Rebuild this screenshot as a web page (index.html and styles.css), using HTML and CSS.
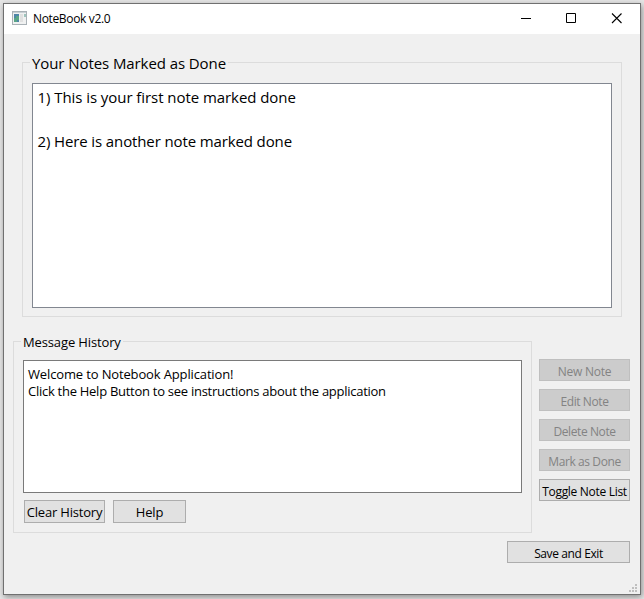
FILE: index.html
```html
<!DOCTYPE html>
<html lang="en">
<head>
<meta charset="utf-8">
<title>NoteBook v2.0</title>
<link rel="stylesheet" href="styles.css">
</head>
<body>
<main class="window">
  <header class="titlebar">
    <svg class="app-icon" width="15" height="14" viewBox="0 0 15 14" shape-rendering="crispEdges">
      <path fill="#a9b1b6" d="M0 0h15v14H0z"/>
      <path fill="#f0f1f1" d="M1 2h13v11H1z"/>
      <path fill="#c8d0d4" d="M1 1h13v1H1z"/>
      <path fill="#4f86a8" d="M2 3h5v8H2z"/>
      <path fill="#5aa686" d="M2 7h3v4H2zM4 5h3v4H4z"/>
      <path fill="#e0e0e0" d="M8 3h3v8H8z"/>
      <path fill="#9fc4bd" d="M12 3h2v3h-2z"/>
    </svg>
    <span class="title">NoteBook v2.0</span>
    <svg class="controls" width="102" height="12" viewBox="0 0 102 12" fill="none" stroke="#000">
      <path d="M0 5.5h10M45.500 .5h9v9h-9z"/>
      <path stroke-width="1.100" d="M91 .5l9.500 9.500M100.500 .5L91 10"/>
    </svg>
  </header>
  <fieldset class="group notes">
    <legend>Your Notes Marked as Done</legend>
    <div class="box note-list">
      <p class="note-one">1) This is your first note marked done</p>
      <p class="note-two">2) Here is another note marked done</p>
    </div>
  </fieldset>
  <div class="lower">
    <fieldset class="group history">
      <legend>Message History</legend>
      <div class="box messages">
        <p class="welcome">Welcome to Notebook Application!</p>
        <p class="hint">Click the Help Button to see instructions about the application</p>
      </div>
      <div class="history-actions">
        <button class="clear">Clear History</button>
        <button class="help">Help</button>
      </div>
    </fieldset>
    <nav class="actions">
      <button class="new" disabled>New Note</button>
      <button disabled>Edit Note</button>
      <button disabled>Delete Note</button>
      <button disabled>Mark as Done</button>
      <button class="toggle">Toggle Note List</button>
    </nav>
  </div>
  <button class="save">Save and Exit</button>
  <svg class="grip" width="8" height="8" viewBox="0 0 8 8" fill="#bfbfbf" shape-rendering="crispEdges">
    <path d="M6 0h2v2H6zM3 3h2v2H3zM6 3h2v2H6zM0 6h2v2H0zM3 6h2v2H3zM6 6h2v2H6z"/>
  </svg>
</main>
</body>
</html>
```
FILE: styles.css
```css
* { box-sizing: border-box; }
body {
  margin: 0;
  height: 599px;
  padding: 3px;
  overflow: hidden;
  background: #e6e6e6;
  font-family: "Open Sans", "Noto Sans", sans-serif;
  color: #000;
}
p { margin: 0; white-space: nowrap; }
.window {
  position: relative;
  width: 638px;
  height: 592px;
  border: 1px solid #707070;
  background: #f0f0f0;
  box-shadow: 1px 2px 6px rgba(0, 0, 0, .4);
}
.titlebar {
  display: flex;
  align-items: flex-start;
  height: 30px;
  padding: 7px 17px 0 8px;
  background: #fff;
}
.app-icon { display: block; }
.title {
  margin: 0 0 0 6px;
  font-size: 12px;
  line-height: 16px;
  letter-spacing: -.35px;
}
.controls { display: block; margin: 2px 0 0 auto; }
.group {
  min-width: 0;
  margin: 0;
  border: 1px solid #dcdcdc;
}
legend { padding: 0 2px; white-space: nowrap; }
.notes {
  width: 600px;
  height: 265px;
  margin: 18px 0 0 18px;
  padding: 10px 9px 0;
}
.notes legend {
  margin-left: -2px;
  height: 21px;
  font-size: 15px;
  line-height: 22px;
  letter-spacing: -.08px;
}
.box { background: #fff; border: 1px solid #7a7a7a; }
.note-list {
  height: 225px;
  padding: 2px 4.5px;
  border-color: #828790;
  font-size: 15px;
  line-height: 22px;
}
.note-one { letter-spacing: -.06px; }
.note-two { margin-top: 22px; letter-spacing: -.12px; }
.lower { display: flex; margin: 16px 0 0 9px; }
.history {
  width: 519px;
  height: 200px;
  padding: 10px 9px 0;
}
.history legend {
  margin-left: -2px;
  height: 17px;
  font-size: 13px;
  line-height: 18px;
  letter-spacing: -.13px;
}
.messages {
  width: 499px;
  height: 133px;
  padding: 5px 4px;
  font-size: 13px;
  line-height: 17px;
}
.welcome { letter-spacing: -.14px; }
.hint { letter-spacing: -.27px; }
.history-actions { display: flex; gap: 8px; margin: 7px 0 0 1px; }
button {
  display: block;
  height: 22px;
  padding: 1px 0 0;
  border: 1px solid #adadad;
  border-radius: 0;
  background: #e1e1e1;
  color: #000;
  font: 12px/21px "Open Sans", "Noto Sans", sans-serif;
  letter-spacing: -.4px;
  white-space: nowrap;
}
button:disabled { background: #ccc; border-color: #bfbfbf; color: #838383; }
.history-actions button {
  height: 23px;
  padding: 0;
  font-size: 13px;
  line-height: 23px;
  letter-spacing: -.2px;
}
.clear { width: 81px; }
.help { width: 73px; }
.actions {
  display: flex;
  flex-direction: column;
  gap: 8px;
  width: 91px;
  margin: 26px 0 0 7px;
}
.actions .new { letter-spacing: -.25px; }
.actions .toggle { letter-spacing: -.3px; }
.save { width: 123px; margin: 8px 0 0 503px; }
.grip { position: absolute; right: 3px; bottom: 2px; }
```
